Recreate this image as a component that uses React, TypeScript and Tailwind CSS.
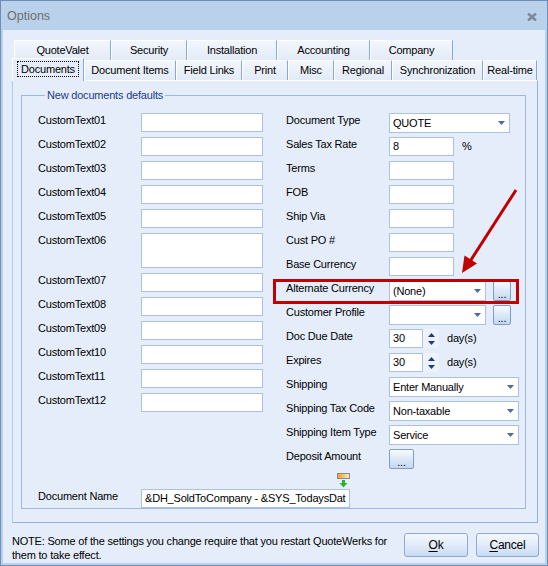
import React from 'react';

const BACK_TABS = [
  { label: 'QuoteValet', w: 'w-[97px]' },
  { label: 'Security', w: 'w-[76px]' },
  { label: 'Installation', w: 'w-[90px]' },
  { label: 'Accounting', w: 'w-[93px]' },
  { label: 'Company', w: 'w-[83px]' },
];

const FRONT_TABS = [
  { label: 'Document Items', w: 'w-[92px]' },
  { label: 'Field Links', w: 'w-[66px]' },
  { label: 'Print', w: 'w-[46px]' },
  { label: 'Misc', w: 'w-[46px]' },
  { label: 'Regional', w: 'w-[58px]' },
  { label: 'Synchronization', w: 'w-[91px]' },
  { label: 'Real-time', w: 'w-[54px]' },
];

const Caret = () => (
  <svg width="7" height="4" viewBox="0 0 7 4" className="shrink-0">
    <path d="M0 0h7L3.5 4z" fill="#4a6ba6" />
  </svg>
);

const TextBox: React.FC<{ className?: string; children?: React.ReactNode }> = ({ className = '', children }) => (
  <div
    className={`h-[19px] bg-white border border-[#abc1df] flex items-center pl-[3px] overflow-hidden whitespace-nowrap ${className}`}
  >
    {children}
  </div>
);

const Select: React.FC<{ className?: string; value?: string }> = ({ className = '', value }) => (
  <div
    className={`h-[20px] bg-white border border-[#abc1df] flex items-center justify-between pl-[3px] pr-[4px] ${className}`}
  >
    <span>{value}</span>
    <Caret />
  </div>
);

const DotsButton: React.FC<{ className?: string }> = ({ className = '' }) => (
  <div
    className={`h-[20px] rounded-[2px] border border-[#7f9cc4] bg-gradient-to-b from-[#f6faff] via-[#dde9f8] to-[#c4d7f0] flex items-end justify-center pb-[1px] leading-[10px] text-[11px] text-black ${className}`}
  >
    ...
  </div>
);

const Spinner: React.FC<{ value: string }> = ({ value }) => (
  <div className="flex items-start">
    <TextBox className="w-[34px]">{value}</TextBox>
    <div className="w-[16px] h-[19px] bg-[#eef3fb] flex flex-col items-center justify-center gap-[4px]">
      <svg width="7" height="4" viewBox="0 0 7 4">
        <path d="M3.5 0L7 4H0z" fill="#1e3f7c" />
      </svg>
      <svg width="7" height="4" viewBox="0 0 7 4">
        <path d="M0 0h7L3.5 4z" fill="#1e3f7c" />
      </svg>
    </div>
    <span className="ml-[8px] pt-[1px]">day(s)</span>
  </div>
);

const Row: React.FC<{ label: string; tall?: boolean; children: React.ReactNode }> = ({ label, tall, children }) => (
  <div className={`flex items-start ${tall ? 'h-[40px]' : 'h-[24px]'}`}>
    <span className="w-[103px] shrink-0 pt-[1px] leading-[13px]">{label}</span>
    {children}
  </div>
);

export default function App() {
  const customTexts = Array.from({ length: 12 }, (_, i) => `CustomText${String(i + 1).padStart(2, '0')}`);

  return (
    <div className="relative w-[548px] h-[566px] bg-[#b9d1ea] border border-[#6d8dba] flex flex-col font-['Liberation_Sans',Arial,sans-serif] text-[11px] tracking-[-0.2px] text-black overflow-hidden">
      {/* Title bar */}
      <div className="h-[29px] shrink-0 flex items-center justify-between pl-[6px] pr-[10px] pt-[2px]">
        <span className="text-[12.5px] text-[#6e6e6e] tracking-normal">Options</span>
        <svg width="10" height="8" viewBox="0 0 10 8">
          <path d="M1 0.5L9 7.5M9 0.5L1 7.5" stroke="#7d8895" strokeWidth="2.4" />
        </svg>
      </div>

      {/* Client area */}
      <div className="flex-1 mx-[2px] mb-[2px] bg-[#e5edfa] flex flex-col pl-[9px] pt-[10px]">
        {/* Back tab row */}
        <div className="flex h-[20px] ml-[2px]">
          {BACK_TABS.map((t) => (
            <div
              key={t.label}
              className={`${t.w} h-[20px] border-t border-l border-white border-r border-r-[#88a8d8] bg-gradient-to-b from-[#f2f6fd] to-[#e3ebf8] flex items-center justify-center`}
            >
              {t.label}
            </div>
          ))}
        </div>

        {/* Front tab row */}
        <div className="flex h-[20px] items-end">
          <div className="relative z-10 w-[72px] h-[23px] -mb-[1px] border-t border-l border-white border-r border-r-[#88a8d8] bg-[#e5edfa] flex items-start justify-center pt-[2px]">
            <span className="border border-dotted border-black px-[3px] leading-[14px]">Documents</span>
          </div>
          {FRONT_TABS.map((t) => (
            <div
              key={t.label}
              className={`${t.w} h-[20px] border-t border-l border-white border-r border-r-[#88a8d8] bg-gradient-to-b from-[#f2f6fd] to-[#e3ebf8] flex items-center justify-center`}
            >
              {t.label}
            </div>
          ))}
        </div>

        {/* Tab panel */}
        <div className="w-[526px] h-[443px] border border-[#92b1de] border-t-white border-l-[#b3cbee] bg-[#e5edfa] pl-[8px] pr-[11px]">
          <fieldset className="mt-[8px] border border-[#9db9e1] pl-[16px] h-[420px]">
            <legend className="ml-[7px] px-[2px] text-[#1c3b8c] leading-[13px]">New documents defaults</legend>

            <div className="flex pt-[11px]">
              {/* Left column */}
              <div className="flex flex-col w-[248px]">
                {customTexts.map((label) => (
                  <Row key={label} label={label} tall={label === 'CustomText06'}>
                    <TextBox className={`w-[122px] ${label === 'CustomText06' ? 'h-[35px]' : ''}`} />
                  </Row>
                ))}
              </div>

              {/* Right column */}
              <div className="flex flex-col">
                <Row label="Document Type">
                  <Select className="w-[121px]" value="QUOTE" />
                </Row>
                <Row label="Sales Tax Rate">
                  <TextBox className="w-[65px]">8</TextBox>
                  <span className="ml-[8px] pt-[1px]">%</span>
                </Row>
                <Row label="Terms">
                  <TextBox className="w-[65px]" />
                </Row>
                <Row label="FOB">
                  <TextBox className="w-[65px]" />
                </Row>
                <Row label="Ship Via">
                  <TextBox className="w-[65px]" />
                </Row>
                <Row label="Cust PO #">
                  <TextBox className="w-[65px]" />
                </Row>
                <Row label="Base Currency">
                  <TextBox className="w-[65px]" />
                </Row>
                <div className="relative">
                  <div className="absolute -left-[13px] -top-[2px] w-[246px] h-[25px] border-[3px] border-[#c00000]" />
                  <Row label="Alternate Currency">
                    <Select className="w-[97px]" value="(None)" />
                    <DotsButton className="w-[18px] ml-[7px]" />
                  </Row>
                </div>
                <Row label="Customer Profile">
                  <Select className="w-[97px]" />
                  <DotsButton className="w-[18px] ml-[7px]" />
                </Row>
                <Row label="Doc Due Date">
                  <Spinner value="30" />
                </Row>
                <Row label="Expires">
                  <Spinner value="30" />
                </Row>
                <Row label="Shipping">
                  <Select className="w-[130px]" value="Enter Manually" />
                </Row>
                <Row label="Shipping Tax Code">
                  <Select className="w-[130px]" value="Non-taxable" />
                </Row>
                <Row label="Shipping Item Type">
                  <Select className="w-[130px]" value="Service" />
                </Row>
                <Row label="Deposit Amount">
                  <DotsButton className="w-[25px] h-[19px]" />
                </Row>
              </div>
            </div>

            {/* field picker icon */}
            <div className="h-[16px] pl-[299px] flex flex-col items-start">
              <div className="w-[13px] h-[6px] border border-[#8a8a8a] bg-gradient-to-r from-[#f0a020] via-[#f8c860] to-[#e8e8e8]" />
              <svg width="13" height="8" viewBox="0 0 13 8" className="mt-[1px]">
                <path d="M5 0h3v3h2.5L6.5 7.5 2.5 3H5z" fill="#2fb22f" />
              </svg>
            </div>

            <Row label="Document Name">
              <TextBox className="w-[209px]">&amp;DH_SoldToCompany - &amp;SYS_TodaysDat</TextBox>
            </Row>
          </fieldset>
        </div>

        {/* Bottom */}
        <div className="flex items-start pt-[10px] pr-[6px]">
          <p className="flex-1 mt-[1px] leading-[14px] text-[11px]">
            NOTE: Some of the settings you change require that you restart QuoteWerks for
            <br />
            them to take effect.
          </p>
          <div className="flex gap-[8px]">
            <button className="w-[64px] h-[24px] rounded-[3px] border border-[#8eaad2] bg-gradient-to-b from-[#f4f8fe] via-[#e2ecfa] to-[#c7daf3] text-[12px]">
              <span className="underline underline-offset-2">O</span>k
            </button>
            <button className="w-[63px] h-[24px] rounded-[3px] border border-[#8eaad2] bg-gradient-to-b from-[#f4f8fe] via-[#e2ecfa] to-[#c7daf3] text-[12px]">
              <span className="underline underline-offset-2">C</span>ancel
            </button>
          </div>
        </div>
      </div>

      {/* Annotation arrow */}
      <svg className="absolute left-0 top-0 pointer-events-none" width="548" height="566" viewBox="0 0 548 566">
        <line x1="515" y1="189" x2="468" y2="262" stroke="#c00000" strokeWidth="3" />
        <path d="M461 272L463.5 254.5L476 262.5z" fill="#c00000" />
      </svg>
    </div>
  );
}
